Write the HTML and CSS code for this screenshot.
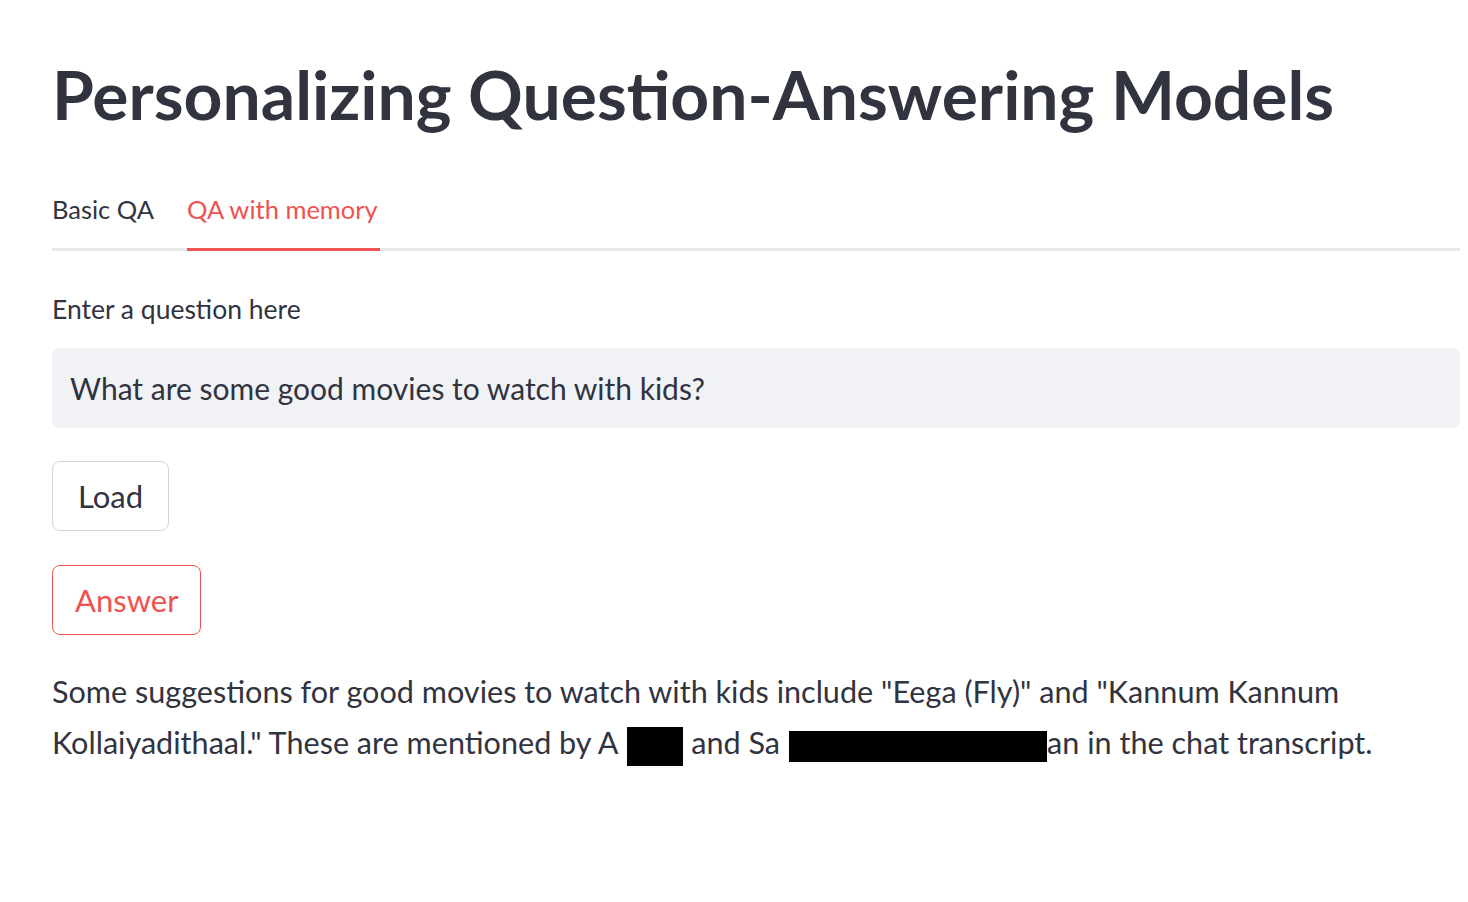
FILE: index.html
```html
<!DOCTYPE html>
<html lang="en">
<head>
<meta charset="utf-8">
<title>Personalizing Question-Answering Models</title>
<link rel="stylesheet" href="styles.css">
</head>
<body>
<main class="main">
  <h1 class="title">Personalizing Question-Answering Models</h1>
  <div class="tabs">
    <div class="tab">Basic QA</div>
    <div class="tab tab-active">QA with memory</div>
  </div>
  <div class="field">
    <label class="label" for="q">Enter a question here</label>
    <div class="input" id="q">What are some good movies to watch with kids?</div>
  </div>
  <div class="btn-row"><button class="btn">Load</button></div>
  <div class="btn-row"><button class="btn btn-primary">Answer</button></div>
  <p class="answer">Some suggestions for good movies to watch with kids include "Eega (Fly)" and "Kannum Kannum Kollaiyadithaal." These are mentioned by A<span class="redact r1"></span> and Sa<span class="redact r2"></span>an in the chat transcript.</p>
</main>
</body>
</html>
```
FILE: styles.css
```css
* { box-sizing: border-box; }
html, body { margin: 0; padding: 0; background: #ffffff; }
body {
  font-family: "Lato", "Noto Sans", sans-serif;
  color: #31333f;
}
.main {
  padding: 52px 8px 0 52px;
}
.title {
  margin: 0;
  font-size: 67.8px;
  font-weight: 700;
  line-height: 84px;
  color: #31333f;
}
.tabs {
  margin-top: 54px;
  display: flex;
  gap: 33px;
  border-bottom: 3px solid #e9e9eb;
}
.tab {
  font-size: 25.5px;
  line-height: 38px;
  padding: 0 0 20px;
  margin-bottom: -3px;
  border-bottom: 3px solid transparent;
}
.tab-active {
  color: #ef524f;
  border-bottom-color: #ef524f;
  padding-right: 2px;
}
.field { margin-top: 38px; }
.label {
  display: block;
  font-size: 26.5px;
  line-height: 40px;
}
.input {
  margin-top: 19px;
  height: 80px;
  background: #f0f2f6;
  border-radius: 8px;
  padding: 0 18px;
  display: flex;
  align-items: center;
  font-size: 30px;
}
.btn-row { margin-top: 33px; }
.btn-row + .btn-row { margin-top: 34px; }
.btn {
  font-family: inherit;
  font-size: 31px;
  height: 70px;
  padding: 0 25px;
  background: #fff;
  color: #31333f;
  border: 1.5px solid #d6d6d9;
  border-radius: 8px;
}
.btn-primary {
  color: #ef524f;
  border-color: #ef524f;
  padding: 0 22px;
}
.answer {
  margin: 31px 0 0;
  font-size: 30.6px;
  line-height: 51px;
}
.redact {
  display: inline-block;
  background: #000;
  vertical-align: middle;
}
.r1 { width: 56px; height: 39px; margin-left: 9px; }
.r2 { width: 258px; height: 31px; margin-left: 9px; }
```
